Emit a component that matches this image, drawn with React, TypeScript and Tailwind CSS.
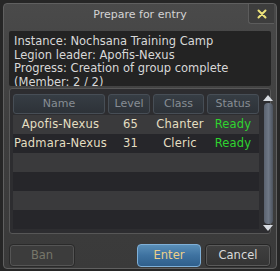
import React from "react";

type Member = { name: string; level: number; cls: string; status: string };

const members: Member[] = [
  { name: "Apofis-Nexus", level: 65, cls: "Chanter", status: "Ready" },
  { name: "Padmara-Nexus", level: 31, cls: "Cleric", status: "Ready" },
];

const font = { fontFamily: '"DejaVu Sans", Verdana, sans-serif' };

function HeaderCell({ label, w }: { label: string; w: string }) {
  return (
    <div
      className={`${w} h-[20px] flex items-center justify-center rounded-[3px] border border-[#474e56] bg-gradient-to-b from-[#363d44] to-[#2d3238] text-[11px] text-[#878d94]`}
    >
      {label}
    </div>
  );
}

export default function App() {
  const rows = [...members, null, null, null, null];

  return (
    <div className="w-[280px] h-[271px] bg-[#262626] p-[3px] pb-[2px]" style={font}>
      <div className="relative h-full rounded-[4px] border border-[#606060] bg-gradient-to-b from-[#4a4a4a] via-[#3e3e3e] to-[#3a3a3a] flex flex-col px-[5px]">
        {/* title bar */}
        <div className="h-[27px] flex justify-center pt-[3px] text-[11px] text-[#d4d4d4]">
          Prepare for entry
        </div>
        <button className="absolute right-[2px] top-0 w-[26px] h-[20px] border-l border-b border-[#5c5c5c] rounded-bl-[3px] bg-[#3d3d3d] flex items-center justify-center">
          <svg width="10" height="10" viewBox="0 0 10 10">
            <path d="M1.5 1.5 L8.5 8.5 M8.5 1.5 L1.5 8.5" stroke="#ece27a" strokeWidth="2" strokeLinecap="round" />
          </svg>
        </button>

        {/* info */}
        <div className="h-[55px] overflow-hidden rounded-[2px] bg-[#232323] px-[5px] pt-[4px] text-[11.5px] leading-[13.5px] text-[#d8d8d8] whitespace-nowrap">
          <div>Instance: Nochsana Training Camp</div>
          <div>Legion leader: Apofis-Nexus</div>
          <div>Progress: Creation of group complete</div>
          <div>(Member: 2 / 2)</div>
        </div>

        {/* table */}
        <div className="mt-[2px] h-[146px] rounded-[3px] border border-[#575757] bg-[#2d2d30] flex px-[3px] pt-[5px]">
          <div className="flex flex-col w-[246px]">
            <div className="flex gap-[3px]">
              <HeaderCell label="Name" w="w-[92px]" />
              <HeaderCell label="Level" w="w-[42px]" />
              <HeaderCell label="Class" w="w-[51px]" />
              <HeaderCell label="Status" w="w-[52px]" />
            </div>
            <div className="mt-[1px] flex flex-col">
              {rows.map((m, i) => (
                <div
                  key={i}
                  className={`h-[19px] flex items-center text-[11.5px] tracking-[0.2px] whitespace-nowrap ${
                    i % 2 === 0 ? "bg-[#3a3a3c]" : "bg-[#26262a]"
                  }`}
                >
                  {m && (
                    <>
                      <div className="w-[95px] text-center text-[#e4dfc2]">{m.name}</div>
                      <div className="w-[45px] text-center text-[#e4dfc2]">{m.level}</div>
                      <div className="w-[54px] text-center text-[#e4dfc2]">{m.cls}</div>
                      <div className="w-[52px] text-center text-[#2fd42f]">{m.status}</div>
                    </>
                  )}
                </div>
              ))}
            </div>
          </div>
          {/* scrollbar */}
          <div className="ml-[4px] w-[11px] flex flex-col items-center">
            <svg width="10" height="6" viewBox="0 0 10 6" className="mt-[1px]">
              <path d="M5 0 L10 6 L0 6 Z" fill="#d8dce2" />
            </svg>
            <div className="mt-[2px] w-[9px] h-[121px] rounded-[4px] bg-gradient-to-r from-[#5b6370] via-[#6f7886] to-[#4c535e]" />
            <svg width="10" height="6" viewBox="0 0 10 6" className="mt-[1px]">
              <path d="M0 0 L10 0 L5 6 Z" fill="#d8dce2" />
            </svg>
          </div>
        </div>

        {/* buttons */}
        <div className="mt-[10px] flex items-center text-[11.5px]">
          <button className="w-[66px] h-[23px] rounded-[4px] border border-[#2a2a2a] bg-[#3c3c3c] shadow-[inset_0_0_0_1px_#555] text-[#77776a]">
            Ban
          </button>
          <button className="ml-auto w-[64px] h-[23px] rounded-[4px] border border-[#7fb0d8] bg-gradient-to-b from-[#5a8fb8] via-[#3e72a0] to-[#2f5f8c] text-[#ecd08a]">
            Enter
          </button>
          <button className="ml-[4px] w-[66px] h-[23px] rounded-[4px] border border-[#262626] bg-gradient-to-b from-[#404040] to-[#343434] shadow-[inset_0_0_0_1px_#5a5a5a] text-[#dadada]">
            Cancel
          </button>
        </div>
      </div>
    </div>
  );
}
